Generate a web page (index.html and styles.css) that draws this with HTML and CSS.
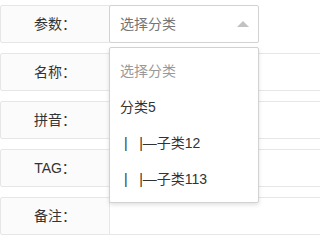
FILE: index.html
```html
<!DOCTYPE html>
<html lang="zh-CN">
<head>
<meta charset="utf-8">
<title>表单</title>
<link rel="stylesheet" href="styles.css">
</head>
<body>
<form class="form">
  <div class="item">
    <label class="label">参数：</label>
    <div class="select">
      <div class="input select-title">选择分类</div>
      <i class="edge"></i>
      <dl class="options">
        <dd class="tips">选择分类</dd>
        <dd>分类5</dd>
        <dd>&nbsp;|&nbsp;&nbsp;&nbsp;|—子类12</dd>
        <dd>&nbsp;|&nbsp;&nbsp;&nbsp;|—子类113</dd>
      </dl>
    </div>
  </div>
  <div class="item">
    <label class="label">名称：</label>
    <div class="block"><div class="input"></div></div>
  </div>
  <div class="item">
    <label class="label">拼音：</label>
    <div class="block"><div class="input"></div></div>
  </div>
  <div class="item">
    <label class="label">TAG：</label>
    <div class="block"><div class="input"></div></div>
  </div>
  <div class="item">
    <label class="label">备注：</label>
    <div class="block"><div class="input"></div></div>
  </div>
</form>
</body>
</html>
```

FILE: styles.css
```css
html, body {
  margin: 0;
  padding: 0;
  background: #fff;
}
body {
  font-family: "Liberation Sans", "Noto Sans CJK SC", sans-serif;
  font-size: 14px;
  color: #333;
}
.form {
  overflow: hidden;
  padding-top: 5px;
}
.item {
  display: flex;
  margin-bottom: 10px;
}
.item:last-child {
  margin-bottom: 5px;
}
.label {
  flex: none;
  width: 110px;
  height: 38px;
  box-sizing: border-box;
  padding: 8px 15px;
  line-height: 20px;
  border: 1px solid #e6e6e6;
  border-radius: 2px 0 0 2px;
  background: #fbfbfb;
  text-align: center;
  white-space: nowrap;
  color: #333;
}
.block {
  flex: 1;
  margin-left: -1px;
  margin-right: -30px;
}
.input {
  height: 38px;
  box-sizing: border-box;
  border: 1px solid #e6e6e6;
  border-radius: 0 2px 2px 0;
  background: #fff;
  padding-left: 10px;
  line-height: 36px;
}
.select {
  position: relative;
  flex: none;
  width: 150px;
  margin-left: -1px;
}
.select-title {
  border-color: #d2d2d2;
  color: #757575;
  border-radius: 2px;
}
.edge {
  position: absolute;
  right: 10px;
  top: 16px;
  width: 0;
  height: 0;
  border-left: 6px solid transparent;
  border-right: 6px solid transparent;
  border-bottom: 6px solid #c2c2c2;
}
.options {
  position: absolute;
  left: 0;
  top: 42px;
  margin: 0;
  padding: 5px 0;
  min-width: 100%;
  box-sizing: border-box;
  border: 1px solid #d2d2d2;
  border-radius: 2px;
  background: #fff;
  box-shadow: 0 2px 4px rgba(0, 0, 0, 0.12);
  z-index: 10;
}
.options dd {
  margin: 0;
  padding: 0 10px;
  line-height: 36px;
  white-space: nowrap;
  color: #333;
}
.options .tips {
  color: #999;
}
```
